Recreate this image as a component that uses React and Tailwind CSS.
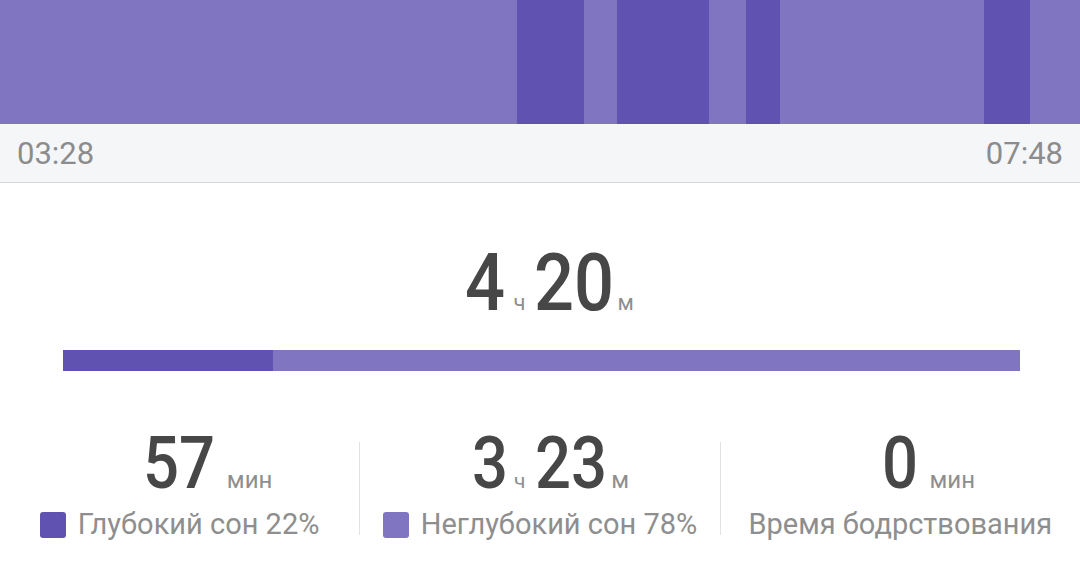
import React from "react";

const segments = [
  { w: "w-[517px]", dark: false },
  { w: "w-[67px]", dark: true },
  { w: "w-[33px]", dark: false },
  { w: "w-[92px]", dark: true },
  { w: "w-[37px]", dark: false },
  { w: "w-[34px]", dark: true },
  { w: "w-[204px]", dark: false },
  { w: "w-[46px]", dark: true },
  { w: "flex-1", dark: false },
];

const Stat = ({ children, label, swatch }) => (
  <div className="flex-1 flex flex-col items-center">
    <div className="flex items-baseline justify-center text-[#474747] leading-none">
      {children}
    </div>
    <div className="mt-[10px] flex items-center gap-[12px] text-[29px] leading-none text-[#8e8e8e]">
      {swatch && <span className={`w-[26px] h-[26px] rounded-[3px] ${swatch}`} />}
      <span>{label}</span>
    </div>
  </div>
);

const Divider = () => <div className="w-px h-[93px] mt-[14px] bg-[#e2e2e2]" />;

export default function App() {
  return (
    <div className="w-[1080px] h-[578px] bg-white overflow-hidden font-['Roboto',sans-serif]">
      {/* sleep phases chart */}
      <div className="flex h-[124px]">
        {segments.map((s, i) => (
          <div key={i} className={`${s.w} h-full ${s.dark ? "bg-[#6052b0]" : "bg-[#8075c0]"}`} />
        ))}
      </div>

      {/* time axis */}
      <div className="flex items-center justify-between h-[59px] px-[17px] bg-[#f5f6f8] border-b border-[#d6d6d8] text-[31px] text-[#8c8c8c] leading-none">
        <span>03:28</span>
        <span>07:48</span>
      </div>

      {/* total */}
      <div className="mt-[60px] flex justify-center">
        <div className="flex items-baseline text-[#474747] leading-none">
          <span className="inline-block text-[80px] font-medium scale-x-[0.88] origin-left mr-[-5px]">4</span>
          <span className="text-[22px] text-[#8e8e8e] ml-[8px] mr-[8px]">ч</span>
          <span className="inline-block text-[80px] font-medium scale-x-[0.88] origin-left mr-[-11px]">20</span>
          <span className="text-[22px] text-[#8e8e8e] ml-[4px] mr-[-19px]">м</span>
        </div>
      </div>

      {/* ratio bar */}
      <div className="mt-[27px] ml-[63px] w-[957px] h-[21px] flex">
        <div className="w-[210px] h-full bg-[#6052b0]" />
        <div className="flex-1 h-full bg-[#8075c0]" />
      </div>

      {/* stats */}
      <div className="mt-[57px] flex items-start">
        <Stat label="Глубокий сон 22%" swatch="bg-[#6052b0]">
          <span className="inline-block text-[72px] font-medium scale-x-[0.88] origin-left mr-[-10px]">57</span>
          <span className="text-[24px] text-[#8e8e8e] ml-[12px] mr-[-56px]">мин</span>
        </Stat>
        <Divider />
        <Stat label="Неглубокий сон 78%" swatch="bg-[#8075c0]">
          <span className="inline-block text-[72px] font-medium scale-x-[0.88] origin-left mr-[-5px]">3</span>
          <span className="text-[21px] text-[#8e8e8e] ml-[6px] mr-[10px]">ч</span>
          <span className="inline-block text-[72px] font-medium scale-x-[0.88] origin-left mr-[-10px]">23</span>
          <span className="text-[24px] text-[#8e8e8e] ml-[4px] mr-[-21px]">м</span>
        </Stat>
        <Divider />
        <Stat label="Время бодрствования">
          <span className="inline-block text-[72px] font-medium scale-x-[0.88] origin-left mr-[-5px]">0</span>
          <span className="text-[24px] text-[#8e8e8e] ml-[12px] mr-[-56px]">мин</span>
        </Stat>
      </div>
    </div>
  );
}
